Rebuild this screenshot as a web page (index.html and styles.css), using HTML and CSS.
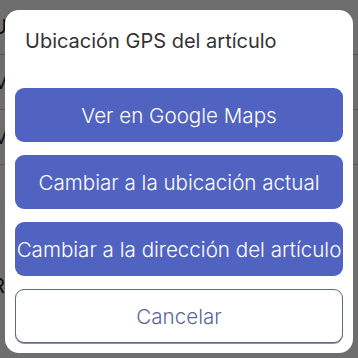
FILE: index.html
```html
<!DOCTYPE html>
<html lang="es">
<head>
<meta charset="utf-8">
<link rel="stylesheet" href="styles.css">
</head>
<body>
<div class="page">
  <div class="row">Ubicación</div>
  <div class="row">Modo</div>
  <div class="row">Modelo</div>
  <div class="row plain">/</div>
  <div class="row plain tall"></div>
  <div class="row plain">Recuento</div>
</div>
<div class="backdrop"></div>
<div class="modal">
  <h2 class="title">Ubicación GPS del artículo</h2>
  <div class="actions">
    <button class="btn primary">Ver en Google Maps</button>
    <button class="btn primary">Cambiar a la ubicación actual</button>
    <button class="btn primary">Cambiar a la dirección del artículo</button>
    <button class="btn outline">Cancelar</button>
  </div>
</div>
</body>
</html>
```
FILE: styles.css
```css
html, body {
  margin: 0;
  padding: 0;
  width: 358px;
  height: 358px;
  overflow: hidden;
  font-family: Inter, "Noto Sans", sans-serif;
}
.page {
  background: #fff;
  height: 358px;
  margin-left: -8px;
  padding-top: 0;
}
.row {
  height: 54px;
  border-bottom: 1px solid #c8c8c8;
  font-size: 20px;
  color: #222;
  display: flex;
  align-items: center;
}
.row.plain { border-bottom: none; }
.row.tall { height: 40px; }
.backdrop {
  position: fixed;
  inset: 0;
  background: rgba(0, 0, 0, 0.57);
}
.modal {
  position: fixed;
  top: 10px;
  left: 5px;
  width: 348px;
  height: 343px;
  box-sizing: border-box;
  padding: 10px;
  background: #fff;
  border-radius: 14px;
  display: flex;
  flex-direction: column;
}
.title {
  margin: 9px 10px 35px;
  font-size: 20px;
  line-height: 24px;
  font-weight: 400;
  color: #333;
}
.actions {
  display: flex;
  flex-direction: column;
  gap: 13px;
}
.btn {
  height: 54px;
  border-radius: 9px;
  font-family: Inter, "Noto Sans", sans-serif;
  font-size: 20.6px;
  font-weight: 300;
  padding: 0;
  white-space: nowrap;
}
.primary {
  background: #5163c0;
  color: #fff;
  border: none;
}
.outline {
  background: #fff;
  color: #5a659a;
  border: 1px solid #5d6a85;
  box-shadow: 0 1px 0 #8d95a3;
}
```
